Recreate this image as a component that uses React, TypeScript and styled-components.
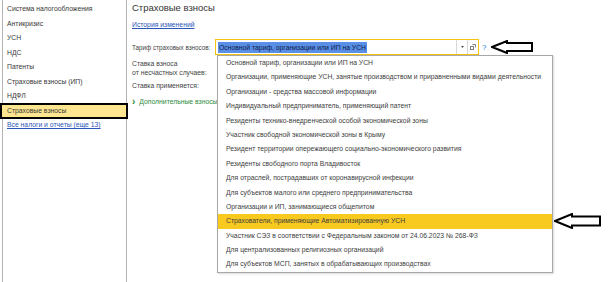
import styled, { createGlobalStyle } from 'styled-components';

const GlobalStyle = createGlobalStyle`
    html, body {
        margin: 0;
        padding: 0;
        background: #ffffff;
    }
    body {
        font-family: 'Liberation Sans', Arial, sans-serif;
        color: #404040;
    }
`;

const sections = ['Система налогообложения', 'Антикризис', 'УСН', 'НДС', 'Патенты', 'Страховые взносы (ИП)', 'НДФЛ', 'Страховые взносы'];

const tariffs = [
    'Основной тариф, организации или ИП на УСН',
    'Организации, применяющие УСН, занятые производством и приравненными видами деятельности',
    'Организации - средства массовой информации',
    'Индивидуальный предприниматель, применяющий патент',
    'Резиденты технико-внедренческой особой экономической зоны',
    'Участник свободной экономической зоны в Крыму',
    'Резидент территории опережающего социально-экономического развития',
    'Резиденты свободного порта Владивосток',
    'Для отраслей, пострадавших от коронавирусной инфекции',
    'Для субъектов малого или среднего предпринимательства',
    'Организации и ИП, занимающиеся общепитом',
    'Страхователи, применяющие Автоматизированную УСН',
    'Участник СЭЗ в соответствии с Федеральным законом от 24.06.2023 № 268-ФЗ',
    'Для централизованных религиозных организаций',
    'Для субъектов МСП, занятых в обрабатывающих производствах',
];

const SELECTED_TARIFF = 11;

const Arrow = ({ width, height, className }: { width: number; height: number; className?: string }) => {
    const mid = height / 2;
    const head = Math.round(width * 0.38);
    const shaft = height * 0.22;
    const points = [
        [1, mid],
        [head, 1],
        [head, shaft],
        [width - 1, shaft],
        [width - 1, height - shaft],
        [head, height - shaft],
        [head, height - 1],
    ]
        .map((p) => p.join(','))
        .join(' ');
    return (
        <svg className={className} width={width} height={height} viewBox={`0 0 ${width} ${height}`}>
            <polygon points={points} fill="#ffffff" stroke="#000000" strokeWidth={2} strokeLinejoin="miter" />
        </svg>
    );
};

export default function App() {
    return (
        <>
            <GlobalStyle />
            <Page>
                <Sidebar>
                    {sections.map((name, idx) => (
                        <SidebarItem key={name} $active={idx === sections.length - 1}>
                            {name}
                        </SidebarItem>
                    ))}
                    <SidebarLink>Все налоги и отчеты (еще 13)</SidebarLink>
                </Sidebar>
                <Main>
                    <Title>Страховые взносы</Title>
                    <HistoryLink>История изменений</HistoryLink>
                    <FormRow>
                        <Label>Тариф страховых взносов:</Label>
                        <Combo>
                            <ComboText>
                                <Selection>{tariffs[0]}</Selection>
                            </ComboText>
                            <ComboButton>
                                <svg width="3" height="2" viewBox="0 0 3 2">
                                    <polygon points="0,0 3,0 1.5,2" fill="#505050" />
                                </svg>
                            </ComboButton>
                            <ComboButton>
                                <svg width="6" height="6" viewBox="0 0 6 6">
                                    <rect x="0.5" y="2.5" width="3" height="3" fill="none" stroke="#808080" strokeWidth="1" />
                                    <path d="M2.5 0.5 H5.5 V3.5" fill="none" stroke="#808080" strokeWidth="1" />
                                </svg>
                            </ComboButton>
                            <DropList>
                                {tariffs.map((t, idx) => (
                                    <DropItem key={t} $selected={idx === SELECTED_TARIFF}>
                                        {t}
                                        {idx === SELECTED_TARIFF && <SideArrow width={47} height={16} />}
                                    </DropItem>
                                ))}
                            </DropList>
                        </Combo>
                        <Help>?</Help>
                        <Arrow width={42} height={14} />
                    </FormRow>
                    <RateLabel>
                        Ставка взноса
                        <br />
                        от несчастных случаев:
                    </RateLabel>
                    <RateLabel>Ставка применяется:</RateLabel>
                    <Extra>
                        <Chevron>›</Chevron>
                        Дополнительные взносы
                    </Extra>
                </Main>
            </Page>
        </>
    );
}

const Page = styled.div`
    width: 611px;
    height: 282px;
    display: flex;
    flex-direction: row;
    overflow: hidden;
    font-size: 6.8px;
`;

const Sidebar = styled.div`
    margin-left: 2px;
    width: 123px;
    height: 281px;
    border-left: 1px solid #b4b4b4;
    border-right: 1px solid #b4b4b4;
    padding-top: 2px;
    box-sizing: content-box;
    display: flex;
    flex-direction: column;
    flex-shrink: 0;
`;

const SidebarItem = styled.div<{ $active: boolean }>`
    height: 14.5px;
    line-height: 14.5px;
    color: #383838;
    white-space: nowrap;
    background: ${(props) => (props.$active ? '#fde68f' : 'transparent')};
    outline: ${(props) => (props.$active ? '2px solid #000000' : 'none')};
    outline-offset: -1px;
    margin-left: ${(props) => (props.$active ? '-2px' : '0')};
    padding-left: ${(props) => (props.$active ? '6px' : '4px')};
    width: ${(props) => (props.$active ? '126px' : 'auto')};
    box-sizing: border-box;
`;

const SidebarLink = styled.div`
    height: 14.5px;
    line-height: 14.5px;
    padding-left: 4px;
    color: #2c55b8;
    text-decoration: underline;
    white-space: nowrap;
`;

const Main = styled.div`
    flex: 1;
    padding-left: 5px;
    padding-top: 1px;
    display: flex;
    flex-direction: column;
    align-items: flex-start;
`;

const Title = styled.div`
    font-size: 9.5px;
    line-height: 14px;
    color: #333333;
`;

const HistoryLink = styled.div`
    margin-top: 3px;
    line-height: 14px;
    color: #2c55b8;
    text-decoration: underline;
`;

const FormRow = styled.div`
    margin-top: 7px;
    display: flex;
    flex-direction: row;
    align-items: center;
    height: 16px;
`;

const Label = styled.div`
    width: 83px;
    font-size: 6.3px;
    color: #444444;
    white-space: nowrap;
`;

const Combo = styled.div`
    position: relative;
    width: 264px;
    height: 16px;
    box-sizing: border-box;
    border: 1px solid #f2c40f;
    display: flex;
    flex-direction: row;
    align-items: stretch;
    background: #ffffff;
`;

const ComboText = styled.div`
    flex: 1;
    display: flex;
    align-items: center;
    padding-left: 2px;
`;

const Selection = styled.span`
    background: #5a8fe6;
    color: #0d1a4a;
    line-height: 11px;
    padding: 0 1px;
    white-space: nowrap;
`;

const ComboButton = styled.div`
    width: 10px;
    display: flex;
    align-items: center;
    justify-content: center;
    border-left: 1px solid #d8d8d8;
`;

const DropList = styled.div`
    position: absolute;
    left: 1px;
    top: 15px;
    width: 336px;
    box-sizing: border-box;
    border: 1px solid #a8a8a8;
    background: #ffffff;
    box-shadow: 1px 1px 2px rgba(0, 0, 0, 0.15);
    z-index: 2;
`;

const DropItem = styled.div<{ $selected: boolean }>`
    position: relative;
    height: 14.4px;
    line-height: 14.4px;
    padding-left: 8px;
    white-space: nowrap;
    color: #404040;
    background: ${(props) => (props.$selected ? '#f8c91f' : 'transparent')};
`;

const SideArrow = styled(Arrow)`
    position: absolute;
    left: calc(100% + 2px);
    top: -1px;
`;

const Help = styled.div`
    margin-left: 3px;
    margin-right: 5px;
    color: #2f7fd0;
    font-size: 8px;
`;

const RateLabel = styled.div`
    margin-top: 4px;
    line-height: 9px;
    color: #444444;
    &:last-of-type {
        margin-top: 5px;
    }
`;

const Extra = styled.div`
    margin-top: 7px;
    line-height: 10px;
    color: #2e8b3e;
    display: flex;
    flex-direction: row;
    align-items: center;
`;

const Chevron = styled.span`
    font-size: 10px;
    margin-right: 4px;
    font-weight: bold;
`;
